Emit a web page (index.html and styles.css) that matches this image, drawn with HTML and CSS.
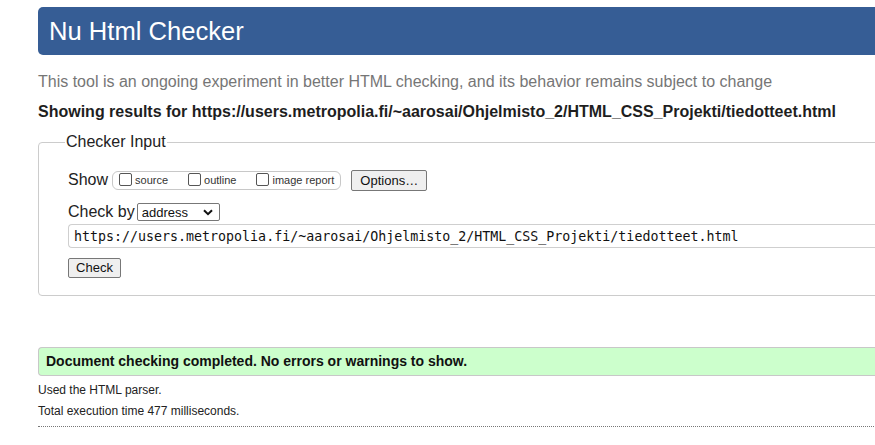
FILE: index.html
```html
<!DOCTYPE html>
<html>
<head>
<meta charset="utf-8">
<title>Nu Html Checker</title>
<link rel="stylesheet" href="styles.css">
</head>
<body>
<div class="page">
  <h1 class="title">Nu Html Checker</h1>
  <p class="lede">This tool is an ongoing experiment in better HTML checking, and its behavior remains subject to change</p>
  <p class="showing">Showing results for https://users.metropolia.fi/~aarosai/Ohjelmisto_2/HTML_CSS_Projekti/tiedotteet.html</p>
  <fieldset class="input-box">
    <legend class="legend">Checker Input</legend>
    <div class="row show-row">
      <span class="label">Show</span>
      <span class="opts">
        <label class="opt"><span class="cb"></span>source</label>
        <label class="opt"><span class="cb"></span>outline</label>
        <label class="opt"><span class="cb"></span>image report</label>
      </span>
      <span class="btn options">Options…</span>
    </div>
    <div class="row checkby-row">
      <span class="label">Check by</span>
      <span class="select">address<svg class="chev" width="10" height="7" viewBox="0 0 10 7"><path d="M1 1.2 L5 5.2 L9 1.2" fill="none" stroke="#111" stroke-width="2"/></svg></span>
    </div>
    <div class="url">https://users.metropolia.fi/~aarosai/Ohjelmisto_2/HTML_CSS_Projekti/tiedotteet.html</div>
    <div class="row"><span class="btn check">Check</span></div>
  </fieldset>
  <div class="success">Document checking completed. No errors or warnings to show.</div>
  <p class="detail">Used the HTML parser.</p>
  <p class="detail">Total execution time 477 milliseconds.</p>
  <hr class="dots">
</div>
</body>
</html>
```
FILE: styles.css
```css
html { overflow: hidden; }
body {
  margin: 0;
  padding: 7px 0 0 38px;
  font-family: "Liberation Sans", Arial, sans-serif;
  color: #222;
  background: #fff;
}
.page { width: 880px; }
.title {
  margin: 0;
  height: 48px;
  line-height: 48px;
  padding-left: 11px;
  background: #365d95;
  color: #fff;
  font-weight: normal;
  font-size: 25.6px;
  border-radius: 5px 0 0 5px;
}
.lede {
  margin: 17px 0 0 0;
  font-size: 16px;
  line-height: 20px;
  color: #767676;
}
.showing {
  margin: 10px 0 0 0;
  font-size: 16px;
  line-height: 20px;
  font-weight: bold;
  color: #1e1e1e;
}
.input-box {
  margin: 11px 0 0 0;
  border: 1px solid #cccccc;
  border-radius: 4px;
  padding: 17px 0 17px 29px;
  min-width: 0;
}
.legend {
  padding: 0 1px;
  margin-left: -3px;
  font-size: 16px;
  line-height: 18px;
  color: #222;
}
.row { display: flex; align-items: center; }
.label { font-size: 16px; color: #222; }
.show-row { height: 24px; }
.opts {
  display: flex;
  align-items: center;
  margin-left: 4px;
  height: 17px;
  border: 1px solid #c8c8c8;
  border-radius: 6px;
  padding: 0 6px 0 6px;
  font-size: 11px;
  color: #333;
}
.opt { display: flex; align-items: center; margin-right: 20px; }
.opt:last-child { margin-right: 0; }
.cb {
  width: 11px;
  height: 11px;
  border: 1px solid #555;
  border-radius: 2px;
  margin-right: 3px;
  margin-top: -2px;
}
.btn {
  display: inline-block;
  box-sizing: border-box;
  border: 1px solid #777;
  border-radius: 2px;
  background: #efefef;
  font-size: 13px;
  color: #111;
  text-align: center;
}
.options { margin-left: 10px; width: 76px; height: 21px; line-height: 19px; }
.checkby-row { margin-top: 11px; height: 18px; }
.select {
  display: flex;
  align-items: center;
  justify-content: space-between;
  box-sizing: border-box;
  margin-left: 2px;
  width: 83px;
  height: 18px;
  border: 1px solid #777;
  border-radius: 2px;
  padding: 0 6px 0 4px;
  font-size: 13px;
  color: #111;
}
.url {
  margin-top: 3px;
  height: 24px;
  line-height: 24px;
  box-sizing: border-box;
  border: 1px solid #cfcfcf;
  border-right: none;
  border-radius: 4px 0 0 4px;
  padding-left: 5px;
  font-family: "DejaVu Sans Mono", monospace;
  font-size: 13.3px;
  color: #111;
}
.check { margin-top: 10px; width: 53px; height: 20px; line-height: 18px; }
.success {
  margin-top: 51px;
  height: 29px;
  line-height: 27px;
  box-sizing: border-box;
  border: 1px solid #c8c8c8;
  border-right: none;
  border-radius: 4px 0 0 4px;
  background: #ccffcc;
  padding-left: 7px;
  font-size: 14px;
  font-weight: bold;
  color: #111;
}
.detail {
  margin: 7px 0 0 0;
  font-size: 12px;
  line-height: 14px;
  color: #222;
}
.dots {
  margin: 8px 0 0 0;
  border: none;
  border-top: 1px dotted #777;
  height: 0;
}
```
